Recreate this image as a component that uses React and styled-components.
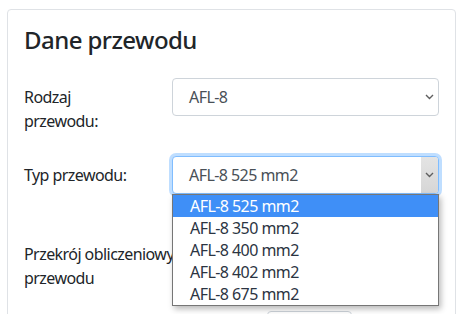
import React from 'react';
import styled, { createGlobalStyle } from 'styled-components';

const GlobalStyle = createGlobalStyle`
  * { box-sizing: border-box; }
  html, body { margin: 0; overflow: hidden; background: #fff; }
  body {
    font-family: "Noto Sans", "Open Sans", sans-serif;
    letter-spacing: -0.035em;
    color: #212529;
  }
`;

// Card that holds the whole form
const Card = styled.div`
  margin: 9px 9px 0 7px;
  border: 1px solid #dfe2e6;
  border-radius: 4px;
  padding: 16px 16px 40px;
`;

const Title = styled.h4`
  margin: 0 0 23px;
  font-size: 24px;
  font-weight: 500;
  line-height: 1.2;
`;

const Row = styled.div`
  display: grid;
  grid-template-columns: 148px 1fr;
  margin-bottom: 16px;
`;

const Label = styled.label`
  display: block;
  width: ${p => p.$width || '118px'};
  padding: ${p => p.$top || 7}px 0 7px;
  font-size: 16px;
  line-height: 24px;
`;

const Field = styled.div`
  position: relative;
  padding-top: ${p => p.$top || 0}px;
  padding-left: ${p => p.$left || 0}px;
`;

const Select = styled.div`
  display: flex;
  align-items: stretch;
  height: 38px;
  padding-left: 16px;
  background: #fff;
  border: 1px solid ${p => (p.$focused ? '#80bdff' : '#ced4da')};
  border-radius: 4px;
  box-shadow: ${p => (p.$focused ? '0 0 0 3px rgba(0, 123, 255, 0.25)' : 'none')};
  color: #495057;
  font-size: 16px;
`;

const Value = styled.span`
  flex: 1;
  display: flex;
  align-items: center;
`;

const Arrow = styled.span`
  width: 17px;
  display: flex;
  align-items: center;
  justify-content: center;
  background: ${p => (p.$pressed ? 'linear-gradient(#e4e4e4, #d6d6d6)' : 'transparent')};
  border-radius: 0 3px 3px 0;
`;

const Dropdown = styled.ul`
  position: absolute;
  top: 38px;
  left: 0;
  right: 0;
  z-index: 2;
  margin: 0;
  padding: 0;
  list-style: none;
  background: #fff;
  border: 1px solid #767676;
  box-shadow: 2px 3px 6px rgba(0, 0, 0, 0.28);
`;

const Option = styled.li`
  height: 22px;
  line-height: 22px;
  padding-left: 17px;
  font-size: 16px;
  background: ${p => (p.$active ? '#3f8ff7' : '#fff')};
  color: ${p => (p.$active ? '#fff' : '#2b3442')};
`;

const ResultBox = styled.div`
  width: 85px;
  height: 38px;
  border: 1px solid #ced4da;
  border-radius: 4px;
`;

const Chevron = () => (
  <svg width="9" height="6" viewBox="0 0 9 6">
    <polyline points="1,1 4.5,4.5 8,1" fill="none" stroke="#5f5f5f" strokeWidth="1.4" />
  </svg>
);

const options = ['AFL-8 525 mm2', 'AFL-8 350 mm2', 'AFL-8 400 mm2', 'AFL-8 402 mm2', 'AFL-8 675 mm2'];

const App = () => {
  return (
    <>
      <GlobalStyle />
      <Card>
        <Title>Dane przewodu</Title>
        <Row>
          <Label>Rodzaj przewodu:</Label>
          <Field>
            <Select>
              <Value>AFL-8</Value>
              <Arrow><Chevron /></Arrow>
            </Select>
          </Field>
        </Row>
        <Row>
          <Label>Typ przewodu:</Label>
          <Field>
            <Select $focused>
              <Value>AFL-8 525 mm2</Value>
              <Arrow $pressed><Chevron /></Arrow>
            </Select>
            <Dropdown>
              {options.map((o, i) => (
                <Option key={o} $active={i === 0}>{o}</Option>
              ))}
            </Dropdown>
          </Field>
        </Row>
        <Row>
          <Label $top={32} $width="200px">Przekrój obliczeniowy przewodu</Label>
          <Field $top={101} $left={95}>
            <ResultBox />
          </Field>
        </Row>
      </Card>
    </>
  );
};

export default App;
